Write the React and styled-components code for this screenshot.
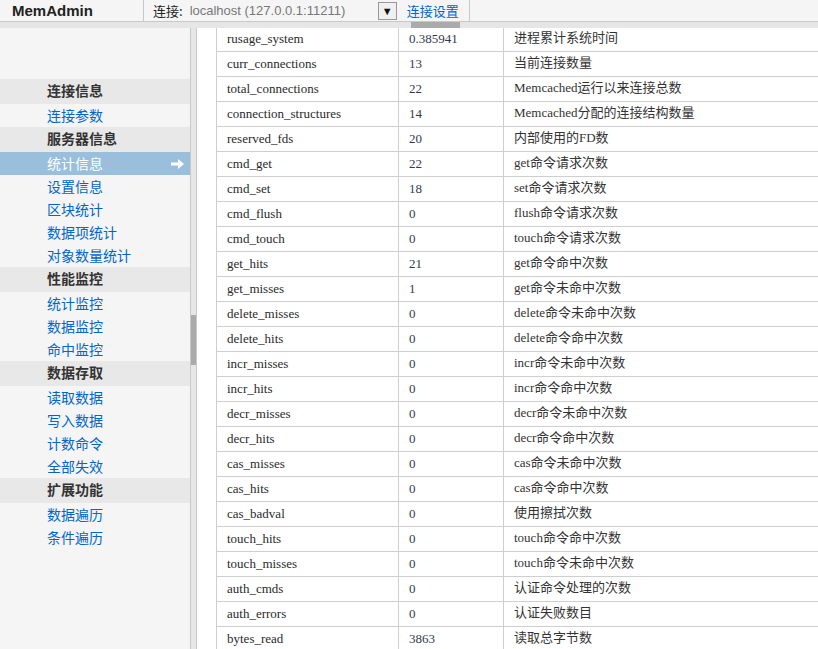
import styled, { createGlobalStyle } from 'styled-components'

const GlobalStyle = createGlobalStyle`
    html, body {
        margin: 0;
        padding: 0;
        overflow: hidden;
        background: #ffffff;
    }
    body {
        font-family: "Liberation Sans", "Noto Sans CJK SC", sans-serif;
    }
`

const menu = [
    { title: '连接信息', items: ['连接参数'] },
    { title: '服务器信息', items: ['统计信息', '设置信息', '区块统计', '数据项统计', '对象数量统计'] },
    { title: '性能监控', items: ['统计监控', '数据监控', '命中监控'] },
    { title: '数据存取', items: ['读取数据', '写入数据', '计数命令', '全部失效'] },
    { title: '扩展功能', items: ['数据遍历', '条件遍历'] },
]

const stats = [
    ['rusage_system', '0.385941', '进程累计系统时间'],
    ['curr_connections', '13', '当前连接数量'],
    ['total_connections', '22', 'Memcached运行以来连接总数'],
    ['connection_structures', '14', 'Memcached分配的连接结构数量'],
    ['reserved_fds', '20', '内部使用的FD数'],
    ['cmd_get', '22', 'get命令请求次数'],
    ['cmd_set', '18', 'set命令请求次数'],
    ['cmd_flush', '0', 'flush命令请求次数'],
    ['cmd_touch', '0', 'touch命令请求次数'],
    ['get_hits', '21', 'get命令命中次数'],
    ['get_misses', '1', 'get命令未命中次数'],
    ['delete_misses', '0', 'delete命令未命中次数'],
    ['delete_hits', '0', 'delete命令命中次数'],
    ['incr_misses', '0', 'incr命令未命中次数'],
    ['incr_hits', '0', 'incr命令命中次数'],
    ['decr_misses', '0', 'decr命令未命中次数'],
    ['decr_hits', '0', 'decr命令命中次数'],
    ['cas_misses', '0', 'cas命令未命中次数'],
    ['cas_hits', '0', 'cas命令命中次数'],
    ['cas_badval', '0', '使用擦拭次数'],
    ['touch_hits', '0', 'touch命令命中次数'],
    ['touch_misses', '0', 'touch命令未命中次数'],
    ['auth_cmds', '0', '认证命令处理的次数'],
    ['auth_errors', '0', '认证失败数目'],
    ['bytes_read', '3863', '读取总字节数'],
]

const ArrowIcon = () => (
    <svg width="13" height="10" viewBox="0 0 13 10">
        <path d="M0 3.5h7V0l6 5-6 5V6.5H0z" fill="#ffffff" />
    </svg>
)

const App = () => {
    return (
        <Page>
            <GlobalStyle />
            <TopBar>
                <Brand>MemAdmin</Brand>
                <Divider />
                <ConnLabel>连接:</ConnLabel>
                <Host>localhost (127.0.0.1:11211)</Host>
                <DropButton>▼</DropButton>
                <SettingsLink>连接设置</SettingsLink>
                <Divider />
            </TopBar>
            <Strip>
                <StripThumb />
            </Strip>
            <Body>
                <Sidebar>
                    {menu.map((group) => (
                        <div key={group.title}>
                            <GroupTitle>{group.title}</GroupTitle>
                            {group.items.map((item) => (
                                <MenuItem key={item} $active={item === '统计信息'}>
                                    {item}
                                    {item === '统计信息' && <ArrowIcon />}
                                </MenuItem>
                            ))}
                        </div>
                    ))}
                </Sidebar>
                <ScrollTrack>
                    <ScrollThumb />
                </ScrollTrack>
                <Main>
                    <Table>
                        <tbody>
                            {stats.map(([name, value, desc]) => (
                                <tr key={name}>
                                    <NameCell>{name}</NameCell>
                                    <ValueCell>{value}</ValueCell>
                                    <DescCell>{desc}</DescCell>
                                </tr>
                            ))}
                        </tbody>
                    </Table>
                </Main>
            </Body>
        </Page>
    )
}

const Page = styled.div`
    width: 818px;
    height: 649px;
    display: flex;
    flex-direction: column;
    overflow: hidden;
`
const TopBar = styled.div`
    height: 21px;
    flex: none;
    display: flex;
    align-items: center;
    background: #f5f5f5;
    border-bottom: 1px solid #c8c8c8;
`
const Brand = styled.div`
    width: 131px;
    padding-left: 12px;
    font-size: 15px;
    font-weight: bold;
    color: #222;
`
const Divider = styled.div`
    width: 1px;
    align-self: stretch;
    background: #c8c8c8;
`
const ConnLabel = styled.span`
    margin-left: 9px;
    font-family: "Noto Sans CJK SC", sans-serif;
    font-size: 13px;
    color: #222;
`
const Host = styled.span`
    margin-left: 7px;
    width: 188px;
    font-size: 13px;
    color: #777;
`
const DropButton = styled.div`
    width: 19px;
    height: 18px;
    box-sizing: border-box;
    border: 1px solid #999;
    background: #f0f0f0;
    display: flex;
    align-items: center;
    justify-content: center;
    font-size: 11px;
    color: #111;
`
const SettingsLink = styled.span`
    margin-left: 10px;
    width: 62px;
    font-family: "Noto Sans CJK SC", sans-serif;
    font-size: 13px;
    color: #0066cc;
`
const Strip = styled.div`
    height: 6px;
    flex: none;
    background: #e6e6e6;
    padding-left: 411px;
`
const StripThumb = styled.div`
    width: 49px;
    height: 6px;
    background: #aaaaaa;
`
const Body = styled.div`
    flex: 1;
    display: flex;
    min-height: 0;
`
const Sidebar = styled.div`
    width: 190px;
    flex: none;
    background: #f5f5f5;
    border-right: 1px solid #c8c8c8;
    padding-top: 51px;
    font-family: "Noto Sans CJK SC", sans-serif;
    font-size: 14px;
`
const GroupTitle = styled.div`
    height: 25px;
    line-height: 23px;
    padding-left: 47px;
    background: #e8e8e8;
    font-weight: bold;
    color: #333;
`
const MenuItem = styled.div`
    height: 23px;
    line-height: 23px;
    padding: 0 6px 0 47px;
    display: flex;
    align-items: center;
    justify-content: space-between;
    background: ${(p) => (p.$active ? '#99bfdc' : 'transparent')};
    color: ${(p) => (p.$active ? '#ffffff' : '#0066cc')};
`
const ScrollTrack = styled.div`
    width: 5px;
    flex: none;
    background: #e6e6e6;
    border-right: 1px solid #c8c8c8;
    padding-top: 287px;
`
const ScrollThumb = styled.div`
    height: 50px;
    background: #aaaaaa;
`
const Main = styled.div`
    flex: 1;
    overflow: hidden;
    padding-left: 19px;
    background: #ffffff;
`
const Table = styled.table`
    border-collapse: collapse;
    margin-top: -2px;
    table-layout: fixed;
    width: 720px;
    font-family: "Liberation Serif", "Noto Sans CJK SC", serif;
    font-size: 13px;
    td {
        height: 24px;
        border: 1px solid #cfcfcf;
        padding: 0 0 0 10px;
        white-space: nowrap;
    }
`
const NameCell = styled.td`
    width: 171px;
    color: #2a2a2a;
`
const ValueCell = styled.td`
    width: 94px;
    color: #333a4a;
`
const DescCell = styled.td`
    color: #333;
    line-height: 16px;
    padding-bottom: 3px !important;
    box-sizing: border-box;
`

export default App
